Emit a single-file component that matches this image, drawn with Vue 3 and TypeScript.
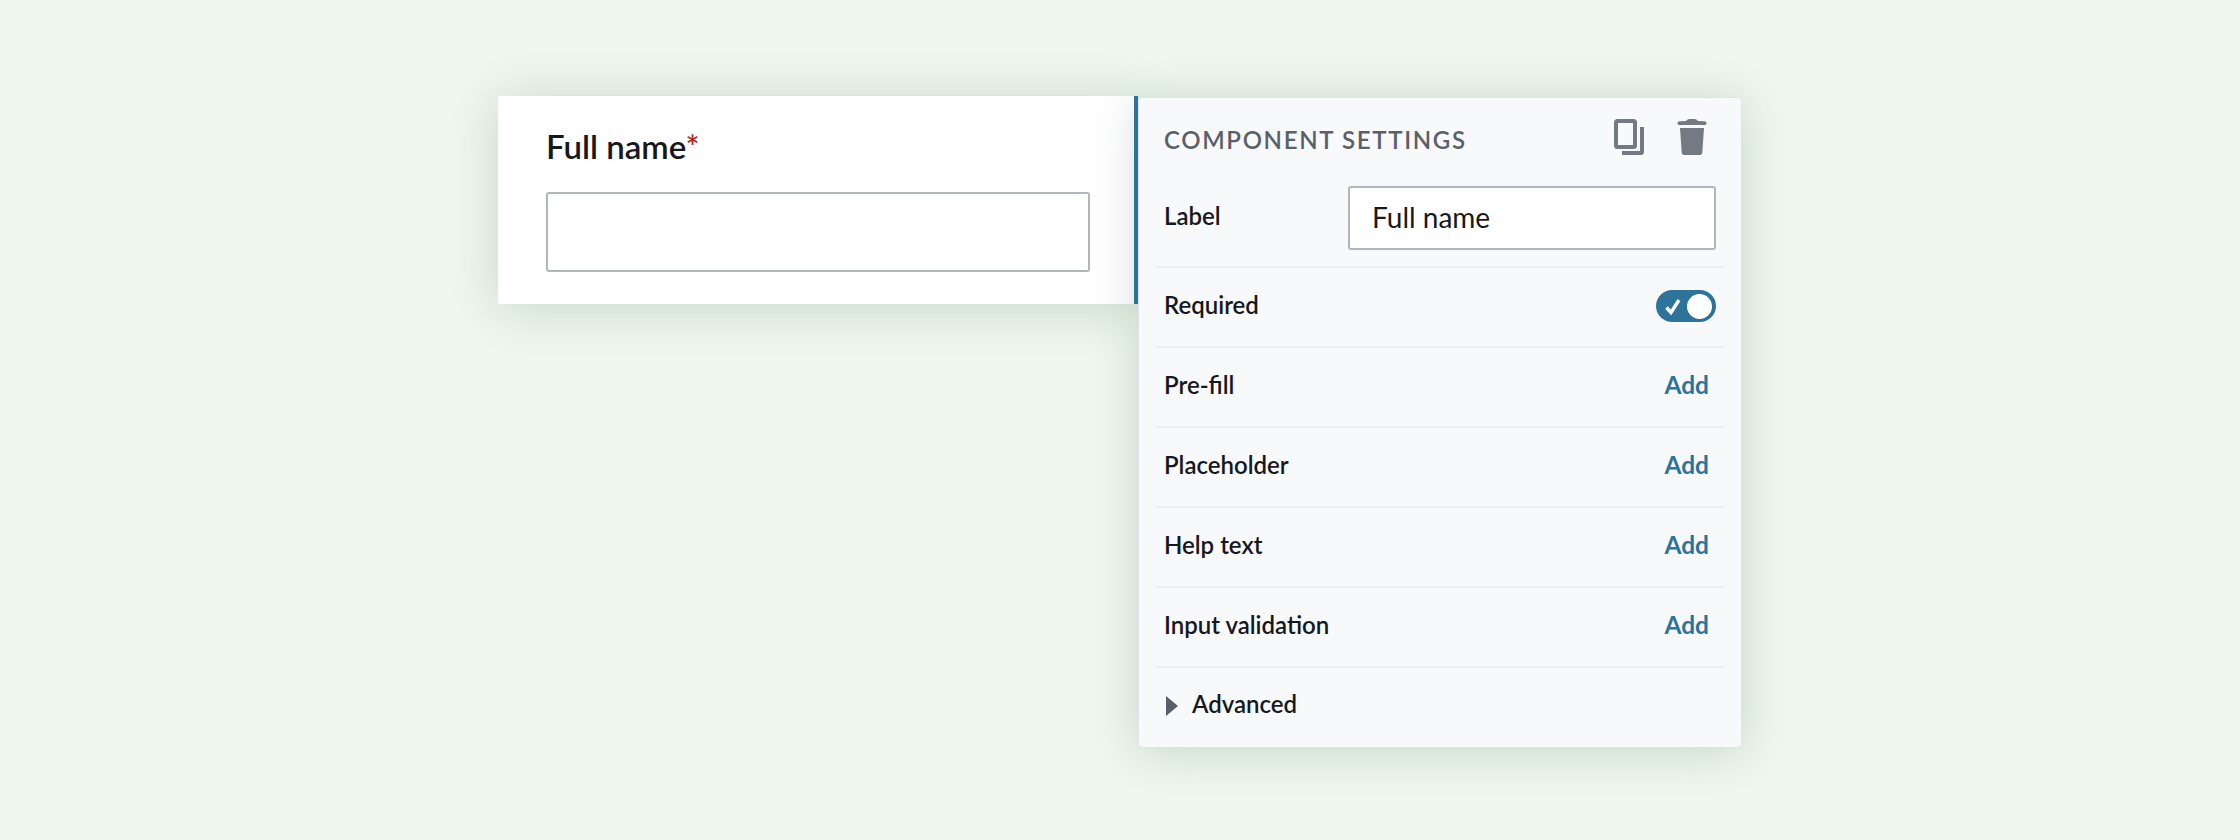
<script setup lang="ts">
const addRows: string[] = ['Pre-fill', 'Placeholder', 'Help text', 'Input validation']
</script>

<template>
  <main class="page">
    <section class="card">
      <label class="card-label">Full name<span class="req">*</span></label>
      <div class="card-input"></div>
    </section>
    <aside class="panel">
      <header class="head">
        <h2 class="title">COMPONENT SETTINGS</h2>
        <div class="tools">
          <svg class="icon" width="30" height="36" viewBox="0 0 30 36" aria-hidden="true">
            <rect x="2" y="2" width="19" height="26" rx="1.5" fill="none" stroke="#737a83" stroke-width="4" />
            <path d="M28 8v25a1 1 0 0 1-1 1H8" fill="none" stroke="#737a83" stroke-width="4" />
          </svg>
          <svg class="icon" width="30" height="36" viewBox="0 0 30 36" aria-hidden="true">
            <path fill="#737a83" d="M9 2C10 .7 11 0 12.500 0h5C19 0 20 .7 21 2l6.500.3c1.300.1 2 .8 2 1.900s-.7 1.900-2 1.900h-25C1.200 6.100.5 5.300.5 4.200S1.200 2.400 2.500 2.300zM3 9h24l-1.700 24.500c-.1 1.500-1 2.500-2.500 2.500H7.200c-1.500 0-2.400-1-2.500-2.500z" />
          </svg>
        </div>
      </header>
      <div class="row row-label">
        <span class="label-text">Label</span>
        <div class="text-input">Full name</div>
      </div>
      <div class="row">
        <span class="text">Required</span>
        <div class="toggle">
          <svg width="16" height="17" viewBox="0 0 16 17" aria-hidden="true">
            <path d="M1.500 9.500 6 14.500 14 2" fill="none" stroke="#fff" stroke-width="3.400" />
          </svg>
          <span class="knob"></span>
        </div>
      </div>
      <div v-for="name in addRows" :key="name" class="row">
        <span class="text">{{ name }}</span>
        <a class="add text">Add</a>
      </div>
      <div class="row advanced">
        <span class="caret"></span>
        <span class="text">Advanced</span>
      </div>
    </aside>
  </main>
</template>

<style>
html, body { margin: 0; background: #eef8ec; }
</style>

<style scoped>
.page {
  box-sizing: border-box;
  width: 2240px;
  height: 840px;
  padding: 96px 0 0 498px;
  display: flex;
  align-items: flex-start;
  background: #eef8ec;
  font-family: Lato, "Open Sans", sans-serif;
  color: #16181d;
}
.card {
  box-sizing: border-box;
  width: 640px;
  height: 208px;
  padding: 32px 48px 0;
  background: #fff;
  box-shadow: 0 4px 48px rgba(50, 80, 60, .2);
  position: relative;
}
.card::after {
  content: "";
  position: absolute;
  top: 0;
  right: 0;
  bottom: 0;
  width: 4px;
  background: #2e7399;
  z-index: 2;
}
.card-label { display: block; font-size: 33px; line-height: 36px; font-weight: 600; }
.req { color: #b3261e; }
.card-input {
  box-sizing: border-box;
  width: 544px;
  height: 80px;
  margin-top: 28px;
  border: 2px solid #b0b5c0;
  border-radius: 3px;
  background: #fff;
}
.panel {
  box-sizing: border-box;
  width: 604px;
  height: 651px;
  margin: 1px 0 0 0;
  padding: 0 17px;
  background: #f8f9fb;
  border: 1px solid #dfe3e6;
  border-radius: 4px;
  box-shadow: 0 4px 48px rgba(50, 80, 60, .2);
  position: relative;
}
.head {
  height: 80px;
  padding: 0 8px;
  display: flex;
  align-items: center;
  justify-content: space-between;
}
.title { margin: 2px 0 0; font-size: 24px; font-weight: 600; letter-spacing: 1.650px; color: #5a6069; }
.tools { display: flex; gap: 33px; margin-right: 9px; margin-top: -3px; }
.row {
  box-sizing: border-box;
  height: 80px;
  padding: 0 8px;
  display: flex;
  align-items: center;
  justify-content: space-between;
  font-size: 24px;
  font-weight: 600;
  border-bottom: 2px solid #ebedf0;
}
.text { margin-top: -5px; }
.row-label { height: 90px; padding-bottom: 8px; }
.label-text { margin-top: -6px; }
.row:last-child { border-bottom: 0; justify-content: flex-start; gap: 14px; }
.advanced .text { margin-top: -9px; }
.text-input {
  box-sizing: border-box;
  width: 368px;
  height: 64px;
  padding: 0 22px 2px;
  display: flex;
  align-items: center;
  background: #fff;
  border: 2px solid #b0b5c0;
  border-radius: 3px;
  font-size: 28px;
  font-weight: 400;
}
.toggle {
  box-sizing: border-box;
  width: 60px;
  height: 32px;
  margin-top: -2px;
  padding: 0 4px 0 9px;
  display: flex;
  align-items: center;
  justify-content: space-between;
  background: #2e7399;
  border-radius: 16px;
}
.knob { width: 25px; height: 25px; border-radius: 50%; background: #fff; }
.add { color: #2e7399; font-weight: 700; margin-right: 7px; font-size: 24.500px; }
.caret {
  width: 0;
  height: 0;
  border-left: 12px solid #5a6069;
  border-top: 10px solid transparent;
  border-bottom: 10px solid transparent;
  margin-left: 2px;
  margin-top: -4px;
}
</style>
